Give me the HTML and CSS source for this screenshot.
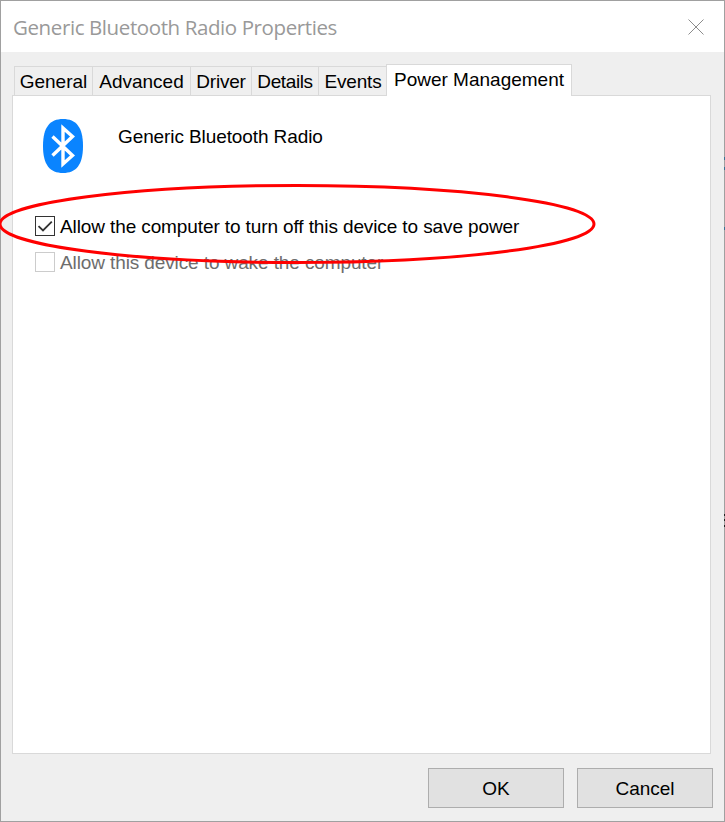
FILE: index.html
```
<!DOCTYPE html>
<html lang="en">
<head>
  <meta charset="UTF-8">
  <title>Generic Bluetooth Radio Properties</title>
  <link rel="stylesheet" href="styles.css">
</head>
<body>
  <div class="window">
    <header class="title-bar">
      <h1 class="title">Generic Bluetooth Radio Properties</h1>
      <svg class="close-icon" width="16" height="16" viewBox="0 0 16 16">
        <path d="M0.5 0.5L15.5 15.5M15.5 0.5L0.5 15.5" fill="none" stroke="#8c8c8c" stroke-width="1"/>
      </svg>
    </header>

    <nav class="tabs">
      <div class="tab tab-general">General</div>
      <div class="tab tab-advanced">Advanced</div>
      <div class="tab tab-driver">Driver</div>
      <div class="tab tab-details">Details</div>
      <div class="tab tab-events">Events</div>
      <div class="tab tab-power active">Power Management</div>
    </nav>

    <main class="panel">
      <div class="device">
        <svg class="device-icon" width="40" height="54" viewBox="0 0 40 54">
          <path d="M20 0C33 0 40 8 40 27S33 54 20 54S0 46 0 27S7 0 20 0Z" fill="#0a84ff"/>
          <path d="M9.5 17.5L29.5 36.5L20 45V9L29.5 17.5L9.5 36.5" fill="none" stroke="#fff" stroke-width="3.4"/>
        </svg>
        <span class="device-name">Generic Bluetooth Radio</span>
      </div>

      <div class="option">
        <span class="checkbox">
          <svg width="18" height="18" viewBox="0 0 18 18">
            <path d="M2.5 9.2L7 13.5L15.8 4.7" fill="none" stroke="#333" stroke-width="1.8"/>
          </svg>
        </span>
        <span class="option-label">Allow the computer to turn off this device to save power</span>
      </div>
      <div class="option disabled">
        <span class="checkbox"></span>
        <span class="option-label">Allow this device to wake the computer</span>
      </div>
    </main>

    <footer class="buttons">
      <button class="button">OK</button>
      <button class="button">Cancel</button>
    </footer>

    <!-- Red highlight around the first option -->
    <svg class="highlight" width="600" height="84" viewBox="0 0 600 84">
      <ellipse cx="297" cy="42" rx="297" ry="38.5" fill="none" stroke="#f00" stroke-width="3"/>
    </svg>

    <!-- Bits of the window behind, showing at the right edge -->
    <i class="speck speck-1"></i>
    <i class="speck speck-2"></i>
    <i class="speck speck-3"></i>
    <i class="speck dark speck-4"></i>
    <i class="speck dark speck-5"></i>
    <i class="speck dark speck-6"></i>
  </div>
</body>
</html>
```
FILE: styles.css
```
* {
  box-sizing: border-box;
}

body {
  margin: 0;
  font-family: "Liberation Sans", Arial, sans-serif;
  font-size: 19px;
  color: #000;
}

.window {
  position: relative;
  display: flex;
  flex-direction: column;
  width: 725px;
  height: 822px;
  border: 1px solid #a0a0a0;
  background: #efefef;
}

/* Title bar */
.title-bar {
  display: flex;
  justify-content: space-between;
  align-items: center;
  height: 51px;
  padding: 0 20px 0 12px;
  background: #fff;
}

.title {
  margin: 1px 0 0;
  font-family: "Open Sans", "Segoe UI", sans-serif;
  font-size: 20.5px;
  font-weight: 400;
  letter-spacing: -0.4px;
  color: #999;
  white-space: nowrap;
}

.close-icon {
  margin-top: 1px;
}

/* Tabs */
.tabs {
  display: flex;
  align-items: flex-end;
  height: 43px;
  padding-left: 13px;
}

.tab {
  height: 29px;
  border: 1px solid #d9d9d9;
  border-width: 1px 0 0 1px;
  line-height: 29px;
  text-align: center;
  white-space: nowrap;
}

.tab-general {
  width: 78px;
}

.tab-advanced {
  width: 98px;
}

.tab-driver {
  width: 61px;
  letter-spacing: -0.2px;
}

.tab-details {
  width: 67px;
  letter-spacing: -0.4px;
}

.tab-events {
  width: 68px;
  padding-left: 1px;
  letter-spacing: -0.2px;
}

.tab-power {
  width: 186px;
}

.tab.active {
  position: relative;
  height: 32px;
  margin-bottom: -1px;
  border-right-width: 1px;
  background: #fff;
}

/* Panel */
.panel {
  width: 699px;
  height: 659px;
  margin-left: 11px;
  padding: 23px 0 0 22px;
  border: 1px solid #d9d9d9;
  background: #fff;
}

.device {
  display: flex;
  gap: 35px;
  height: 54px;
  margin: 0 0 43px 8px;
}

.device-name {
  margin-top: 7px;
  letter-spacing: -0.1px;
}

.option {
  display: flex;
  align-items: center;
  gap: 5px;
  height: 20px;
  margin-bottom: 16px;
}

.option-label {
  padding-top: 2px;
  letter-spacing: -0.11px;
  white-space: nowrap;
}

.checkbox {
  display: flex;
  width: 20px;
  height: 20px;
  border: 1px solid #333;
}

.disabled {
  color: #6d6d6d;
}

.disabled .checkbox {
  border-color: #ccc;
}

/* Buttons */
.buttons {
  display: flex;
  justify-content: flex-end;
  gap: 13px;
  padding: 14px 11px 0 0;
}

.button {
  width: 136px;
  height: 40px;
  padding: 2px 0 0;
  border: 1px solid #adadad;
  background: #e1e1e1;
  font: inherit;
  color: inherit;
}

/* Overlays */
.highlight {
  position: absolute;
  left: -1px;
  top: 181px;
}

.speck {
  position: absolute;
  right: -1px;
  width: 1px;
  height: 3px;
  background: #3a7294;
}

.speck.dark {
  height: 2px;
  background: #222;
}

.speck-1 {
  top: 156px;
}

.speck-2 {
  top: 166px;
}

.speck-3 {
  top: 226px;
}

.speck-4 {
  top: 513px;
}

.speck-5 {
  top: 518px;
}

.speck-6 {
  top: 524px;
}
```
